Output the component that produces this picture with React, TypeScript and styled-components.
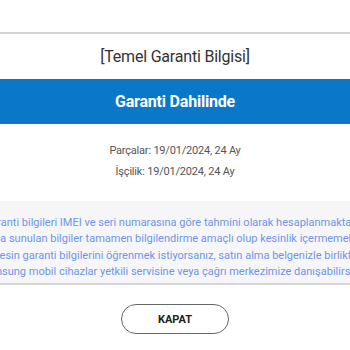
import styled, { createGlobalStyle } from 'styled-components';

const GlobalStyle = createGlobalStyle`
  html, body {
    margin: 0;
    padding: 0;
    background: #ffffff;
  }
  body {
    font-family: Roboto, "Noto Sans", sans-serif;
  }
`;

const Page = styled.div`
  width: 350px;
  height: 350px;
  overflow: hidden;
  display: flex;
  flex-direction: column;
  background: #ffffff;
`;

const TopBar = styled.div`
  height: 32px;
  flex-shrink: 0;
  border-bottom: 2px solid #d3d3d3;
`;

const Title = styled.h1`
  margin: 0;
  height: 45px;
  display: flex;
  align-items: center;
  justify-content: center;
  font-size: 16px;
  font-weight: 400;
  letter-spacing: -0.2px;
  color: #333333;
`;

const StatusBand = styled.div`
  height: 45px;
  display: flex;
  align-items: center;
  justify-content: center;
  background: #0a77c8;
  color: #ffffff;
  font-size: 16px;
  font-weight: 700;
  letter-spacing: -0.2px;
`;

const Dates = styled.div`
  display: flex;
  flex-direction: column;
  align-items: center;
  gap: 2px;
  padding: 17px 0 0;
  height: 60px;
  box-sizing: border-box;
`;

const DateLine = styled.p`
  margin: 0;
  font-size: 11px;
  line-height: 19px;
  letter-spacing: -0.2px;
  color: #555555;
`;

const Notice = styled.div`
  margin-top: 17px;
  height: 84px;
  box-sizing: border-box;
  padding: 14px 0 0;
  background: #f6f6f8;
  border-bottom: 2px solid #d6d6d6;
  display: flex;
  flex-direction: column;
  align-items: center;
`;

const NoticeLine = styled.p`
  margin: 0;
  display: flex;
  justify-content: center;
  width: 350px;
  white-space: nowrap;
  font-size: 11px;
  line-height: 16.3px;
  color: #6e95e6;
`;

const Footer = styled.div`
  display: flex;
  justify-content: center;
  padding-top: 19px;
`;

const CloseButton = styled.button`
  width: 108px;
  height: 30px;
  border: 1px solid #666666;
  border-radius: 15px;
  background: #ffffff;
  font-family: Roboto, "Noto Sans", sans-serif;
  font-size: 11px;
  font-weight: 700;
  color: #222222;
  cursor: pointer;
`;

const noticeLines = [
  'Garanti bilgileri IMEI ve seri numarasına göre tahmini olarak hesaplanmaktadır.',
  'Burada sunulan bilgiler tamamen bilgilendirme amaçlı olup kesinlik içermemektedir.',
  'Kesin garanti bilgilerini öğrenmek istiyorsanız, satın alma belgenizle birlikte',
  'Samsung mobil cihazlar yetkili servisine veya çağrı merkezimize danışabilirsiniz.',
];

const App = () => {
  return (
    <Page>
      <GlobalStyle />
      <TopBar />
      <Title>[Temel Garanti Bilgisi]</Title>
      <StatusBand>Garanti Dahilinde</StatusBand>
      <Dates>
        <DateLine>Parçalar: 19/01/2024, 24 Ay</DateLine>
        <DateLine>İşçilik: 19/01/2024, 24 Ay</DateLine>
      </Dates>
      <Notice>
        {noticeLines.map((line) => (
          <NoticeLine key={line}>
            <span>{line}</span>
          </NoticeLine>
        ))}
      </Notice>
      <Footer>
        <CloseButton>KAPAT</CloseButton>
      </Footer>
    </Page>
  );
};

export default App;
